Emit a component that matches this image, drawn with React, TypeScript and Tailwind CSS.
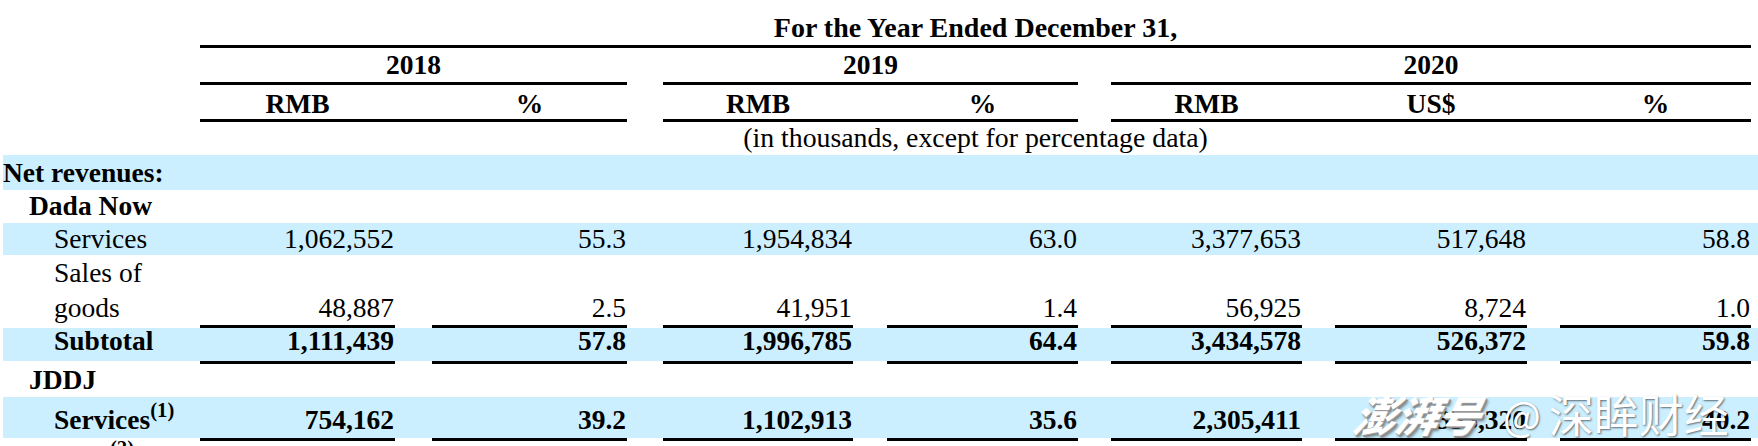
import React, { Fragment } from "react";

const COLS = ["w-[195px]", "w-[195px]", "w-[190px]", "w-[191px]", "w-[191px]", "w-[192px]", "w-[191px]"];
const GAPS = ["w-[37px]", "w-[36px]", "w-[34px]", "w-[33px]", "w-[33px]", "w-[33px]"];

type RowProps = {
  blue?: boolean;
  h: string;
  label: React.ReactNode;
  labelCls: string;
  values?: string[];
  cellCls: string;
};

function Row({ blue, h, label, labelCls, values = [], cellCls }: RowProps) {
  return (
    <div className={`flex ml-[3px] ${h} ${blue ? "bg-[#ccefff]" : ""}`}>
      <div className={`w-[197px] shrink-0 whitespace-normal ${labelCls}`}>{label}</div>
      {COLS.map((c, i) => (
        <Fragment key={i}>
          <div className={`${c} shrink-0 text-right pr-[1px] whitespace-nowrap ${cellCls}`}>{values[i] ?? ""}</div>
          {i < 6 && <div className={`${GAPS[i]} shrink-0`} />}
        </Fragment>
      ))}
      <div className="flex-1" />
    </div>
  );
}

function Rule({ gapsBlack }: { gapsBlack?: boolean[] }) {
  return (
    <div className="flex ml-[3px] h-[3px]">
      <div className="w-[197px] shrink-0" />
      {COLS.map((c, i) => (
        <Fragment key={i}>
          <div className={`${c} shrink-0 bg-black`} />
          {i < 6 && <div className={`${GAPS[i]} shrink-0 ${gapsBlack && gapsBlack[i] ? "bg-black" : ""}`} />}
        </Fragment>
      ))}
      <div className="flex-1" />
    </div>
  );
}

export default function App() {
  const yearGaps = [true, false, true, false, true, true];
  return (
    <div className="relative w-[1758px] h-[446px] overflow-hidden bg-white text-black font-['Liberation_Serif','Times_New_Roman',serif] text-[27.5px] leading-[32px]">
      {/* Title */}
      <div className="flex ml-[3px] h-[45px]">
        <div className="w-[197px] shrink-0" />
        <div className="w-[1551px] shrink-0 text-center font-bold text-[28px] pt-[12px]">For the Year Ended December 31,</div>
      </div>
      <Rule gapsBlack={[true, true, true, true, true, true]} />
      {/* Years */}
      <div className="flex ml-[3px] h-[34px] font-bold pt-[1px]">
        <div className="w-[197px] shrink-0" />
        <div className="w-[427px] shrink-0 text-center">2018</div>
        <div className="w-[36px] shrink-0" />
        <div className="w-[415px] shrink-0 text-center">2019</div>
        <div className="w-[33px] shrink-0" />
        <div className="w-[640px] shrink-0 text-center">2020</div>
      </div>
      <Rule gapsBlack={yearGaps} />
      {/* Sub headers */}
      <div className="flex ml-[3px] h-[34px] font-bold pt-[3px]">
        <div className="w-[197px] shrink-0" />
        <div className="w-[195px] shrink-0 text-center">RMB</div>
        <div className="w-[37px] shrink-0" />
        <div className="w-[195px] shrink-0 text-center">%</div>
        <div className="w-[36px] shrink-0" />
        <div className="w-[190px] shrink-0 text-center">RMB</div>
        <div className="w-[34px] shrink-0" />
        <div className="w-[191px] shrink-0 text-center">%</div>
        <div className="w-[33px] shrink-0" />
        <div className="w-[191px] shrink-0 text-center">RMB</div>
        <div className="w-[33px] shrink-0" />
        <div className="w-[192px] shrink-0 text-center">US$</div>
        <div className="w-[33px] shrink-0" />
        <div className="w-[191px] shrink-0 text-center">%</div>
      </div>
      <Rule gapsBlack={yearGaps} />
      {/* in thousands */}
      <div className="flex ml-[3px] h-[33px]">
        <div className="w-[197px] shrink-0" />
        <div className="w-[1551px] shrink-0 text-center text-[27.8px]">(in thousands, except for percentage data)</div>
      </div>

      <Row blue h="h-[35px]" label="Net revenues:" labelCls="font-bold pt-[2px]" cellCls="" />
      <Row h="h-[33px]" label="Dada Now" labelCls="font-bold pl-[26px]" cellCls="" />
      <Row
        blue
        h="h-[32px]"
        label="Services"
        labelCls="pl-[51px]"
        values={["1,062,552", "55.3", "1,954,834", "63.0", "3,377,653", "517,648", "58.8"]}
        cellCls=""
      />
      <Row
        h="h-[70px]"
        label="Sales of goods"
        labelCls="pl-[51px] leading-[35px]"
        values={["48,887", "2.5", "41,951", "1.4", "56,925", "8,724", "1.0"]}
        cellCls="pt-[35px] leading-[35px]"
      />
      <Rule />
      <Row
        blue
        h="h-[33px]"
        label="Subtotal"
        labelCls="font-bold pl-[51px] leading-[26px]"
        values={["1,111,439", "57.8", "1,996,785", "64.4", "3,434,578", "526,372", "59.8"]}
        cellCls="font-bold leading-[26px]"
      />
      <Rule />
      <Row h="h-[33px]" label="JDDJ" labelCls="font-bold pl-[26px]" cellCls="" />
      <Row
        blue
        h="h-[41px]"
        label={
          <>
            Services<sup className="-top-[12px]">(1)</sup>
          </>
        }
        labelCls="font-bold pl-[51px] pt-[7px]"
        values={["754,162", "39.2", "1,102,913", "35.6", "2,305,411", "353,320", "40.2"]}
        cellCls="font-bold pt-[7px]"
      />
      <Rule />
      <Row
        h="h-[40px]"
        label={
          <>
            Others<sup className="-top-[12px]">(2)</sup>
          </>
        }
        labelCls="font-bold pl-[26px] pt-[1px]"
        cellCls="font-bold pt-[1px]"
      />

      {/* watermark overlay */}
      <div className="absolute left-[1355px] top-[391px] flex items-center text-white font-['Noto_Sans_CJK_SC',sans-serif] leading-none pointer-events-none">
        <span className="text-[42px] font-black italic [text-shadow:1px_1px_0_#9a9a9a,2px_2px_0_#8a8a8a,3px_3px_3px_rgba(0,0,0,0.45)] -skew-x-12">澎湃号</span>
        <span className="ml-[22px] text-[40px] [text-shadow:1px_1px_2px_rgba(0,0,0,0.55)]">@</span>
        <span className="ml-[8px] text-[45px] [text-shadow:1px_1px_2px_rgba(0,0,0,0.55)]">深眸财经</span>
      </div>
    </div>
  );
}
